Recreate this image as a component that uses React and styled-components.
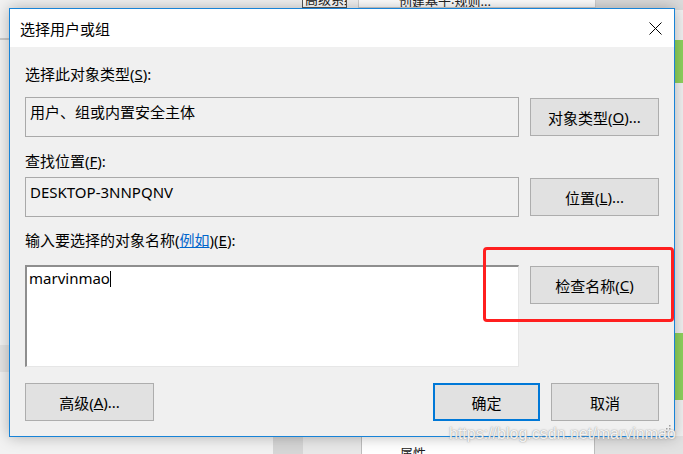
import React from "react";
import styled, { createGlobalStyle } from "styled-components";

const Global = createGlobalStyle`
  html, body { margin: 0; padding: 0; }
  body { background: #f0f0f0; font-family: "Noto Sans", "Noto Sans CJK SC", sans-serif; }
`;

const Desktop = styled.div`
  position: relative;
  width: 683px;
  height: 454px;
  overflow: hidden;
  background: #f2f2f2;
`;

/* ---- background windows (free canvas) ---- */
const BgWindow = styled.div`
  position: absolute;
  background: ${(p) => p.$bg || "#fff"};
  border: ${(p) => p.$border || "none"};
  box-sizing: border-box;
  font-size: 13px;
  color: #333;
  overflow: hidden;
`;

const BgText = styled.span`
  position: absolute;
  white-space: nowrap;
  font-size: 13px;
  color: #222;
`;

/* ---- dialog ---- */
const Dialog = styled.div`
  position: absolute;
  left: 9px;
  top: 8px;
  width: 666px;
  height: 429px;
  box-sizing: border-box;
  border: 1px solid #1883d7;
  background: #f0f0f0;
  box-shadow: 0 0 14px rgba(0, 0, 0, 0.28);
  display: flex;
  flex-direction: column;
`;

const TitleBar = styled.div`
  height: 38px;
  flex: none;
  background: #fff;
  display: flex;
  align-items: center;
  justify-content: space-between;
  padding: 0 12px 0 10px;
`;

const Title = styled.div`
  font-size: 15px;
  color: #000;
  font-family: "Noto Sans CJK SC", sans-serif;
`;

const CloseIcon = styled.svg`
  width: 13px;
  height: 13px;
  display: block;
`;

const Body = styled.div`
  flex: 1;
  display: flex;
  flex-direction: column;
  padding: 17px 15px 0 15px;
  position: relative;
`;

const Label = styled.div`
  font-size: 15px;
  line-height: 20px;
  height: 20px;
  color: #000;
  margin-top: ${(p) => p.$mt || 0}px;
  white-space: nowrap;
`;

const Link = styled.span`
  color: #0066cc;
  text-decoration: underline;
`;

const Row = styled.div`
  display: flex;
  gap: 11px;
  align-items: ${(p) => p.$align || "center"};
  margin-top: ${(p) => p.$mt || 0}px;
`;

const ReadBox = styled.div`
  flex: 1;
  height: 40px;
  box-sizing: border-box;
  border: 1px solid #a9a9a9;
  background: #f0f0f0;
  padding: 4px 4px;
  font-size: 15px;
  line-height: 20px;
  color: #000;
  white-space: nowrap;
`;

const TextArea = styled.div`
  flex: 1;
  height: 102px;
  box-sizing: border-box;
  border-style: solid;
  border-width: 2px 1px 1px 2px;
  border-color: #8e8e8e #e6e6e6 #e6e6e6 #8e8e8e;
  background: #fff;
  padding: 0 2px;
  font-size: 15px;
  line-height: 22px;
  color: #000;
`;

const Caret = styled.span`
  display: inline-block;
  width: 1px;
  height: 16px;
  background: #000;
  vertical-align: -3px;
`;

const Button = styled.div`
  flex: none;
  width: ${(p) => p.$w || 129}px;
  height: 38px;
  box-sizing: border-box;
  border: ${(p) => (p.$default ? "2px solid #0078d7" : "1px solid #adadad")};
  background: #e1e1e1;
  display: flex;
  align-items: center;
  justify-content: center;
  font-size: 15px;
  color: #000;
  white-space: nowrap;
  margin-top: ${(p) => p.$mt || 0}px;
`;

const Footer = styled.div`
  display: flex;
  margin-top: 16px;
  gap: 11px;
`;

const Spacer = styled.div`
  flex: 1;
`;

const Highlight = styled.div`
  position: absolute;
  left: 473px;
  top: 200px;
  width: 191px;
  height: 75px;
  box-sizing: border-box;
  border: 3px solid #ff1f1f;
  border-radius: 4px;
  pointer-events: none;
`;

const Grip = styled.svg`
  position: absolute;
  right: 2px;
  bottom: 2px;
  width: 10px;
  height: 10px;
`;

const Watermark = styled.div`
  position: absolute;
  left: 449px;
  top: 425px;
  font-family: "Liberation Sans", Arial, sans-serif;
  font-size: 16px;
  color: rgba(255, 255, 255, 0.9);
  text-shadow: 0 0 1px rgba(120, 120, 120, 0.7), 0 0 2px rgba(150, 150, 150, 0.5);
  white-space: nowrap;
  pointer-events: none;
`;

function Btn({ children, ...rest }) {
  return <Button {...rest}>{children}</Button>;
}

export default function App() {
  return (
    <>
      <Global />
      <Desktop>
        {/* background windows */}
        <BgWindow style={{ left: 0, top: 38, width: 10, height: 2 }} $bg="#c9c9c9" />
        <BgWindow style={{ left: 0, top: 345, width: 10, height: 27 }} $bg="#e4e4e4" />
        <BgWindow style={{ left: 302, top: -10, width: 45, height: 18 }} $bg="#fff" $border="1px solid #555">
          <BgText style={{ left: 2, top: -2 }}>高级系统</BgText>
        </BgWindow>
        <BgWindow style={{ left: 358, top: -10, width: 238, height: 18 }} $bg="#fff" $border="1px solid #cfcfcf">
          <BgText style={{ left: 40, top: 0 }}>创建基于‧规则...</BgText>
        </BgWindow>
        <BgWindow style={{ left: 596, top: 0, width: 90, height: 10 }} $bg="#dcdcdc" />
        <BgWindow style={{ left: 675, top: 40, width: 8, height: 43 }} $bg="#8fd35e" />
        <BgWindow style={{ left: 675, top: 333, width: 8, height: 67 }} $bg="#8fd35e" />
        <BgWindow style={{ left: 273, top: 436, width: 30, height: 20 }} $bg="#d6d6d6" />
        <BgWindow style={{ left: 303, top: 436, width: 58, height: 20 }} $bg="#e8e8e8" />
        <BgWindow style={{ left: 361, top: 436, width: 234, height: 20 }} $bg="#fff" $border="1px solid #bdbdbd">
          <BgText style={{ left: 38, top: 6 }}>属性</BgText>
        </BgWindow>
        <BgWindow style={{ left: 595, top: 436, width: 90, height: 20 }} $bg="#e2e2e2" />

        <Dialog>
          <TitleBar>
            <Title>选择用户或组</Title>
            <CloseIcon viewBox="0 0 13 13">
              <path d="M0.5 0.5 L12.5 12.5 M12.5 0.5 L0.5 12.5" stroke="#000" strokeWidth="1" fill="none" />
            </CloseIcon>
          </TitleBar>
          <Body>
            <Label>
              选择此对象类型(<u>S</u>):
            </Label>
            <Row $mt={13}>
              <ReadBox>用户、组或内置安全主体</ReadBox>
              <Btn>
                对象类型(<u>O</u>)...
              </Btn>
            </Row>
            <Label $mt={14}>
              查找位置(<u>F</u>):
            </Label>
            <Row $mt={6}>
              <ReadBox>DESKTOP-3NNPQNV</ReadBox>
              <Btn>
                位置(<u>L</u>)...
              </Btn>
            </Row>
            <Label $mt={13}>
              输入要选择的对象名称(<Link>例如</Link>)(<u>E</u>):
            </Label>
            <Row $mt={15} $align="flex-start">
              <TextArea>
                marvinmao
                <Caret />
              </TextArea>
              <Btn $mt={1}>
                检查名称(<u>C</u>)
              </Btn>
            </Row>
            <Footer>
              <Btn>
                高级(<u>A</u>)...
              </Btn>
              <Spacer />
              <Btn $w={107} $default>
                确定
              </Btn>
              <Btn $w={108}>取消</Btn>
            </Footer>
            <Highlight />
          </Body>
          <Grip viewBox="0 0 10 10">
            {[
              [8, 2],
              [8, 5],
              [5, 5],
              [8, 8],
              [5, 8],
              [2, 8],
            ].map(([x, y], i) => (
              <rect key={i} x={x - 1} y={y - 1} width="1.5" height="1.5" fill="#a0a0a0" />
            ))}
          </Grip>
        </Dialog>
        <Watermark>https://blog.csdn.net/marvinmao</Watermark>
      </Desktop>
    </>
  );
}
